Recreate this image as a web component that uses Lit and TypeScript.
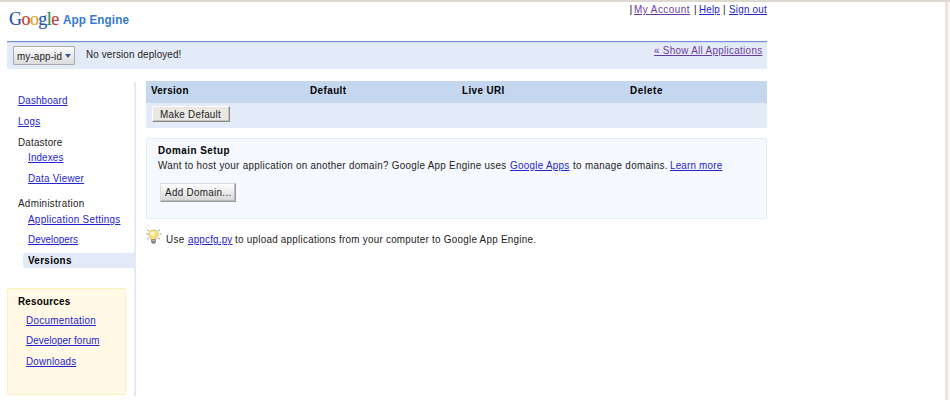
import { LitElement, html, css } from "lit";
import { customElement } from "lit/decorators.js";
import { styleMap } from "lit/directives/style-map.js";

const pen = document.createElement("canvas").getContext("2d")!;

/** Sets a label in slightly condensed letters, tracked so that it fills the given width. */
function fit(text: string, width: number, kind = "", size = 10.6, squeeze = 0.93) {
  const bold = kind.includes("bold");
  pen.font = `${bold ? "bold " : ""}${size}px "Liberation Sans"`;
  const inner = width / squeeze;
  const spacing = (inner - pen.measureText(text).width) / text.length;
  return html`<span class="fit ${kind}" style=${styleMap({ width: `${width}px` })}><span class="glyphs" style=${styleMap({
    width: `${inner}px`,
    transform: `scaleX(${squeeze})`,
    letterSpacing: `${spacing.toFixed(3)}px`,
  })}>${text}</span></span>`;
}

const link = (text: string, width: number, kind = "") =>
  html`<a class="link ${kind}">${fit(text, width)}</a>`;

@customElement("app-root")
export class AppRoot extends LitElement {
  static styles = css`
    :host { display: block; width: 950px; height: 400px; overflow: hidden; background: #fff;
      font: 10.6px/14px "Liberation Sans", Arial, sans-serif; color: #222; box-sizing: border-box;
      border-top: 2px solid #e0d7d0; }
    * { box-sizing: border-box; }
    .frame { display: flex; justify-content: space-between; height: 398px; }
    .edge { width: 5px; background: #f9f6f4; border-left: 3px solid #ece5e1; }
    .page { width: 760px; margin-left: 7px; }
    .fit { display: inline-block; white-space: pre; vertical-align: top; }
    .glyphs { display: inline-block; vertical-align: top; transform-origin: 0 0; }
    .bold { font-weight: bold; color: #000; }
    .link { display: block; color: #2424cf; }
    .link .glyphs { text-decoration: underline; text-decoration-thickness: 1px; text-underline-offset: 1px; }
    .visited { color: #6b3aa0; }
    .top { display: flex; justify-content: space-between; height: 39px; }
    .logo { display: flex; padding: 7px 0 0 2px; }
    .google { display: flex; font: 18px/20px "Liberation Serif", serif; width: 54px; letter-spacing: -0.55px; -webkit-text-stroke: 0.2px currentColor; }
    .blue { color: #2855b5; } .red { color: #c63a31; } .gold { color: #dba51b; } .green { color: #2d9143; }
    .product { font-size: 12px; line-height: 14px; margin-top: 4px; }
    .product .bold { color: #3379d0; }
    .account { display: flex; }
    .bar { width: 4.5px; }
    .appbar { display: flex; height: 28px; background: #e4ebf8; border-top: 1px solid #6f91da; box-shadow: inset 0 1px #d0dcf4; }
    .picker { display: flex; width: 62px; height: 19px; margin: 4px 0 0 6px; padding: 2px 0 0 3px; border: 1px solid #aaa;
      border-radius: 1px; background: linear-gradient(#fafafa, #ddd); }
    .arrow { width: 6px; height: 4px; margin: 5px 0 0 3px; }
    .status { margin: 5px 0 0 10.5px; }
    .all { margin: 1px 4px 0 auto; }
    .body { display: flex; padding-top: 13px; }
    .side { width: 129px; height: 314px; border-right: 2px solid #e2e9f8; padding-top: 11px; }
    .nav { display: grid; grid-template-rows: 21px 21px 15px 21px 25px 16px 20px 21px 15px; padding-left: 10.5px; }
    .nav .sub { padding-left: 10.5px; }
    .nav .current { margin-left: 5px; padding-left: 5.5px; background: #e2e9f7; border-radius: 3px 0 0 3px; height: 15px; }
    .resources { width: 119px; height: 107px; margin-top: 20px; padding: 5px 0 0 9.5px; border: 1px solid #fcefba;
      border-radius: 2px; background: #fff9e5; display: grid; grid-template-rows: 19px 20px 21px 14px; }
    .resources .link { padding-left: 8px; }
    .main { width: 621px; margin-left: 10px; }
    .head { display: grid; grid-template-columns: 158.5px 152px 168.5px 1fr; height: 22px; margin-top: -1px;
      padding: 2px 0 0 5px; background: #c5d7ef; }
    .row { height: 25px; background: #e4ebf8; padding: 3px 0 0 6px; }
    .button { display: block; font: inherit; line-height: 14px; color: #222; text-align: left; border: 1px solid #fff;
      border-right-color: #888; border-bottom-color: #888; margin: 0; }
    .make { width: 78px; height: 16px; line-height: 13px; padding: 0 0 0 7px; background: #ebe8e4; box-shadow: inset -1px -1px #c7c2bd; }
    .domain { height: 81px; margin-top: 10px; padding: 4px 0 0 10.5px; background: #f6f9ff; border: 1px solid #e2ebf9; border-radius: 2px; }
    .line { display: flex; }
    .second { padding-top: 1px; }
    .add { width: 76px; height: 19px; margin: 11px 0 0 2px; padding: 0 0 1px 4px; background: linear-gradient(#fff, #d6d6d6);
      border-color: #ddd #999 #999 #ddd; box-shadow: inset -1px -1px #bcbcbc; }
    .tip { display: flex; margin-top: 10px; }
    .bulb { width: 16px; height: 16px; margin-right: 4px; }
    .tiptext { display: flex; padding-top: 3px; }
  `;

  render() {
    return html`
      <div class="frame">
        <div class="page">
          <header class="top">
            <div class="logo">
              <div class="google"><span class="blue">G</span><span class="red">o</span><span class="gold">o</span><span class="blue">g</span><span class="green">l</span><span class="red">e</span></div>
              <div class="product">${fit("App Engine", 66, "bold", 12, 0.97)}</div>
            </div>
            <div class="account">
              <span class="bar">|</span>${link("My Account", 56.5, "visited")}${fit(" | ", 8.5)}${link("Help", 21)}${fit(" | ", 9)}${link("Sign out", 38)}
            </div>
          </header>
          <div class="appbar">
            <div class="picker">
              ${fit("my-app-id", 45)}
              <svg class="arrow" viewBox="0 0 6 4"><path d="M0 0H6L3 4Z" fill="#39558f" /></svg>
            </div>
            <div class="status">${fit("No version deployed!", 95.5)}</div>
            <div class="all">${link("« Show All Applications", 109.5, "visited")}</div>
          </div>
          <div class="body">
            <aside class="side">
              <nav class="nav">
                ${link("Dashboard", 49.5)}
                ${link("Logs", 22.3)}
                <div>${fit("Datastore", 44.5)}</div>
                ${link("Indexes", 35.5, "sub")}
                ${link("Data Viewer", 56, "sub")}
                <div>${fit("Administration", 66.5)}</div>
                ${link("Application Settings", 92.5, "sub")}
                ${link("Developers", 50, "sub")}
                <div class="current">${fit("Versions", 43.7, "bold")}</div>
              </nav>
              <section class="resources">
                <div>${fit("Resources", 52.5, "bold")}</div>
                ${link("Documentation", 70)}
                ${link("Developer forum", 73.5)}
                ${link("Downloads", 50.3)}
              </section>
            </aside>
            <main class="main">
              <div class="head">
                <div>${fit("Version", 37.7, "bold")}</div>
                <div>${fit("Default", 36.5, "bold")}</div>
                <div>${fit("Live URI", 42.5, "bold")}</div>
                <div>${fit("Delete", 33, "bold")}</div>
              </div>
              <div class="row"><button class="button make">${fit("Make Default", 61)}</button></div>
              <section class="domain">
                <div>${fit("Domain Setup", 72, "bold")}</div>
                <div class="line second">
                  ${fit("Want to host your application on another domain? Google App Engine uses ", 352)}${link("Google Apps", 60)}${fit(" to manage domains. ", 100.8)}${link("Learn more", 52.3)}
                </div>
                <button class="button add">${fit("Add Domain...", 66.5)}</button>
              </section>
              <div class="tip">
                <svg class="bulb" viewBox="0 0 16 16">
                  <path d="M1 1l2 1M14 1l-2 1M0 5h2M13.5 5h2M1 10l2-1M14 10l-2-1" stroke="#a5a08e" stroke-width="1" />
                  <path d="M7.5 1C4.4 1 2.6 2.9 2.7 5.4C2.8 7.6 5 8.4 5.3 10.5H9.7C10 8.4 12.2 7.6 12.3 5.4C12.4 2.9 10.6 1 7.5 1Z" fill="#f8e27c" stroke="#c9b66a" stroke-width=".8" />
                  <circle cx="6.4" cy="4.6" r="2" fill="#fffbe0" />
                  <path d="M5 10.3H10V13L8.7 14.7H6.3L5 13Z" fill="#858587" />
                  <path d="M5.5 11.5H9.5" stroke="#d0d0d0" stroke-width=".7" />
                </svg>
                <div class="tiptext">${fit("Use ", 21.5)}${link("appcfg.py", 44.5)}${fit(" to upload applications from your computer to Google App Engine.", 304.7)}</div>
              </div>
            </main>
          </div>
        </div>
        <div class="edge"></div>
      </div>
    `;
  }
}
